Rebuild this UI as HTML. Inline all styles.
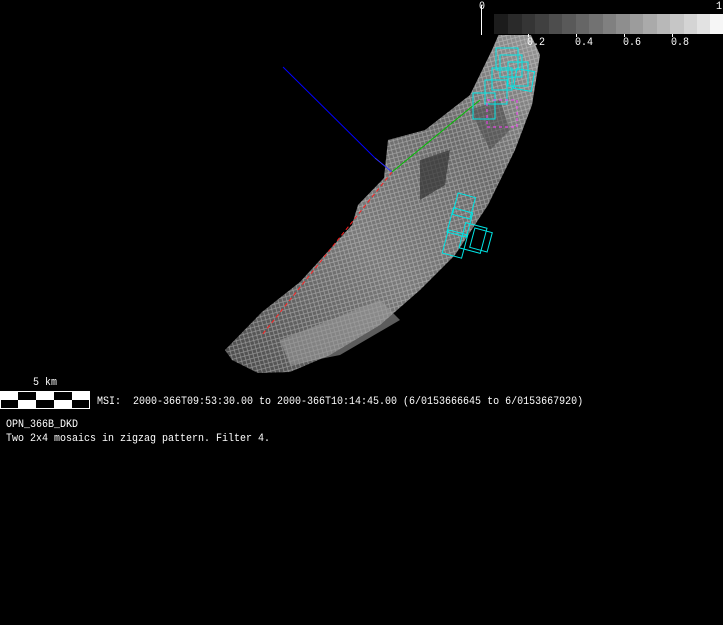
<!DOCTYPE html>
<html><head><style>
html,body{margin:0;padding:0;background:#000;width:723px;height:625px;overflow:hidden}
.t{position:absolute;color:#fff;font-family:"Liberation Mono","DejaVu Sans Mono",monospace;font-size:10px;white-space:pre;line-height:13px;transform:scaleY(1.12);transform-origin:0 0}
</style></head><body>
<svg width="723" height="625" style="position:absolute;left:0;top:0">
<defs>
<linearGradient id="g" x1="0" y1="1" x2="1" y2="0">
<stop offset="0" stop-color="#4a4a4a"/><stop offset="0.4" stop-color="#7a7a7a"/><stop offset="0.7" stop-color="#6a6a6a"/><stop offset="1" stop-color="#999"/>
</linearGradient>
<pattern id="p" width="6" height="6" patternUnits="userSpaceOnUse" patternTransform="rotate(30)">
<rect width="6" height="6" fill="none"/><path d="M0 0L6 6M6 0L0 6" stroke="#ddd" stroke-width="0.7" opacity="0.5"/>
</pattern>
</defs>
<path d="M225 350 L262 312 L300 282 L352 225 L358 205 L384 178 L388 140 L425 130 L470 95 L492 50 L505 20 L525 22 L540 55 L532 105 L515 150 L488 205 L455 255 L420 290 L380 325 L330 355 L290 372 L258 373 L232 360 Z" fill="url(#g)"/>
<path d="M225 350 L262 312 L300 282 L352 225 L358 205 L384 178 L388 140 L425 130 L470 95 L492 50 L505 20 L525 22 L540 55 L532 105 L515 150 L488 205 L455 255 L420 290 L380 325 L330 355 L290 372 L258 373 L232 360 Z" fill="url(#p)"/>
<path d="M280 340 L330 320 L380 300 L400 320 L340 355 L290 365Z" fill="#999" opacity="0.6"/>
<path d="M420 160 L450 150 L445 185 L420 200Z" fill="#333" opacity="0.7"/>
<path d="M470 110 L500 100 L510 130 L490 150Z" fill="#444" opacity="0.5"/>
<line x1="283" y1="67" x2="375" y2="158" stroke="#0000ff" stroke-width="1"/>
<line x1="375" y1="158" x2="392" y2="172" stroke="#3333ff"/>
<line x1="392" y1="172" x2="480" y2="100" stroke="#00c000"/>
<line x1="392" y1="172" x2="262" y2="335" stroke="#ff2020" stroke-dasharray="4,3"/>
<g fill="none" stroke="#00e5e5" stroke-width="1">
<rect x="473" y="93" width="22" height="26"/>
<rect x="485" y="80" width="22" height="24"/>
<rect x="492" y="68" width="20" height="22"/>
<rect x="500" y="55" width="22" height="22"/>
<rect x="508" y="62" width="20" height="24"/>
<rect x="496" y="48" width="22" height="22"/>
<rect x="515" y="70" width="18" height="20" transform="rotate(10 524 80)"/>
<rect x="450" y="210" width="20" height="25" transform="rotate(15 460 222)"/>
<rect x="462" y="225" width="22" height="26" transform="rotate(15 473 238)"/>
<rect x="455" y="195" width="18" height="22" transform="rotate(15 464 206)"/>
<rect x="472" y="230" width="18" height="20" transform="rotate(15 481 240)"/>
<rect x="445" y="232" width="20" height="24" transform="rotate(15 455 244)"/>
</g>
<rect x="487" y="100" width="30" height="27" fill="none" stroke="#ff40ff" stroke-dasharray="3,3"/>
<rect x="480" y="14" width="242" height="21" fill="#000"/>
<g>
<rect x="494" y="14" width="14" height="20" fill="#1c1c1c"/><rect x="508" y="14" width="14" height="20" fill="#2a2a2a"/>
<rect x="522" y="14" width="13" height="20" fill="#353535"/><rect x="535" y="14" width="14" height="20" fill="#404040"/>
<rect x="549" y="14" width="13" height="20" fill="#4d4d4d"/><rect x="562" y="14" width="14" height="20" fill="#595959"/>
<rect x="576" y="14" width="13" height="20" fill="#666"/><rect x="589" y="14" width="14" height="20" fill="#727272"/>
<rect x="603" y="14" width="13" height="20" fill="#808080"/><rect x="616" y="14" width="14" height="20" fill="#8e8e8e"/>
<rect x="630" y="14" width="13" height="20" fill="#9c9c9c"/><rect x="643" y="14" width="14" height="20" fill="#aaa"/>
<rect x="657" y="14" width="13" height="20" fill="#b8b8b8"/><rect x="670" y="14" width="14" height="20" fill="#c6c6c6"/>
<rect x="684" y="14" width="13" height="20" fill="#d4d4d4"/><rect x="697" y="14" width="13" height="20" fill="#e2e2e2"/>
<rect x="710" y="14" width="13" height="20" fill="#f6f6f6"/>
</g>
<line x1="481.5" y1="5" x2="481.5" y2="35" stroke="#fff"/>
<g stroke="#fff"><line x1="528.5" y1="34" x2="528.5" y2="37"/><line x1="576.5" y1="34" x2="576.5" y2="37"/><line x1="624.5" y1="34" x2="624.5" y2="37"/><line x1="672.5" y1="34" x2="672.5" y2="37"/></g>
<rect x="0.5" y="391.5" width="89" height="17" fill="#000" stroke="#fff"/>
<g fill="#fff">
<rect x="0" y="391" width="18" height="9"/><rect x="36" y="391" width="18" height="9"/><rect x="72" y="391" width="18" height="9"/>
<rect x="18" y="400" width="18" height="9"/><rect x="54" y="400" width="18" height="9"/>
</g>
</svg>
<div class="t" style="left:479px;top:0px">0</div>
<div class="t" style="left:716px;top:0px">1</div>
<div class="t" style="left:527px;top:36px">0.2</div>
<div class="t" style="left:575px;top:36px">0.4</div>
<div class="t" style="left:623px;top:36px">0.6</div>
<div class="t" style="left:671px;top:36px">0.8</div>
<div class="t" style="left:33px;top:376px">5 km</div>
<div class="t" style="left:97px;top:395px">MSI:  2000-366T09:53:30.00 to 2000-366T10:14:45.00 (6/0153666645 to 6/0153667920)</div>
<div class="t" style="left:6px;top:418px">OPN_366B_DKD</div>
<div class="t" style="left:6px;top:432px">Two 2x4 mosaics in zigzag pattern. Filter 4.</div>
</body></html>
